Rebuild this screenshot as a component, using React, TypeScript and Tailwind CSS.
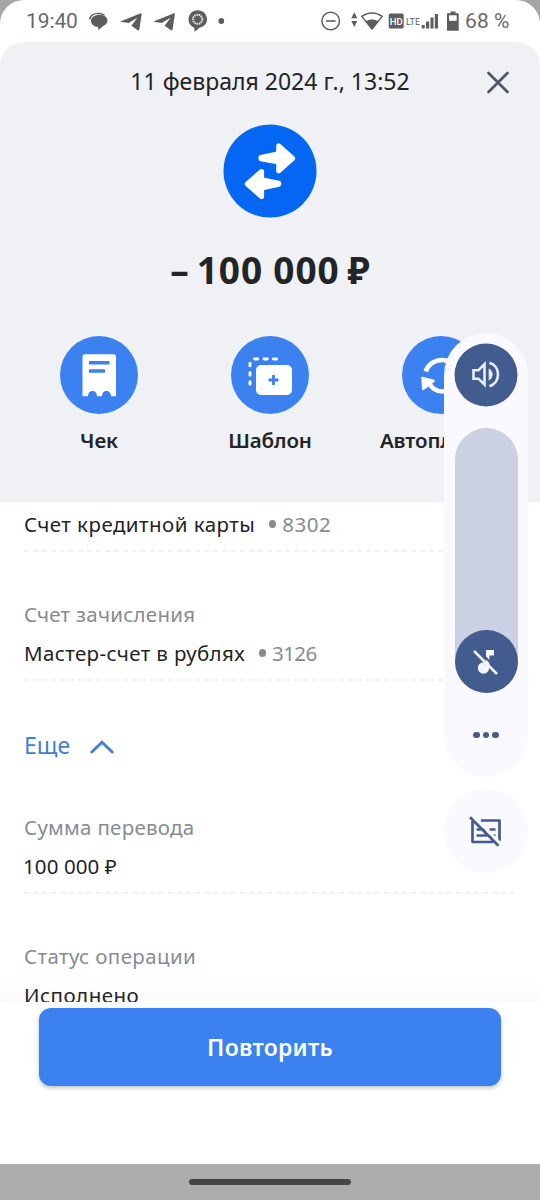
import type { ReactNode } from "react";

function StatusBar() {
  return (
    <div className="h-[42px] shrink-0 bg-[#a6a6a6]">
      <div className="flex h-full items-center justify-between rounded-t-[24px] bg-white pl-[26px] pr-[30px] font-[Roboto] text-[21px] text-[#686868]">
        <div className="flex items-center">
          <span className="w-[53px] whitespace-nowrap pt-[2px] tracking-[-0.1px]">19:40</span>
          <svg width="150" height="30" viewBox="79 6 150 30" fill="#5d5d5d">
            <path d="M89.700 19.500c.2-3.800 4.400-6.300 9-6.100 2.600.1 4.400.7 5.900 1.800" fill="none" stroke="#5d5d5d" strokeWidth="1.400" />
            <path d="M99.500 14.700c4.600 0 8 2.500 8 5.900 0 2.500-1.700 4.500-4.300 5.500l-4.700 4-.5-3c-4-.3-7-2.900-7-6.300 0-3.700 3.900-6.100 8.500-6.100z" />
            <path d="M121.500 20.900l18.700-7.500c1-.4 1.600.1 1.400 1.100l-2.200 14.800c-.2 1.300-1.100 1.500-2 .8l-6-4.400 6-8-8.800 5.300-6.700-1c-1.200-.2-1.300-.7-.4-1.100z" />
            <path d="M154.700 20.900l18.700-7.500c1-.4 1.600.1 1.400 1.100l-2.200 14.800c-.2 1.300-1.100 1.500-2 .8l-6-4.400 6-8-8.800 5.300-6.700-1c-1.200-.2-1.300-.7-.4-1.100z" />
            <path d="M197.700 10.300c5.300 0 9.300 3.900 9.300 9 0 4.200-2.900 7.500-7.500 8.500l-4.800 4-.6-4.200c-3.400-1.300-5.600-4.500-5.600-8.300 0-5.100 4-9 9.200-9z" />
            <circle cx="197.700" cy="19.300" r="4.600" fill="none" stroke="#e4e4e4" strokeWidth="2" strokeDasharray="1.500 .7" />
            <circle cx="221.300" cy="21" r="2.900" />
          </svg>
        </div>
        <div className="flex items-center">
          <svg width="146" height="30" viewBox="319 6 146 30" fill="#5d5d5d">
            <circle cx="330.700" cy="21" r="8.800" fill="none" stroke="#5d5d5d" strokeWidth="1.500" />
            <path d="M326 21h9.500" stroke="#5d5d5d" strokeWidth="1.600" />
            <path d="M354.300 12.300l3 6h-6zM354.300 27l3-6h-6z" />
            <path d="M361.800 16.400c6-4.700 14.400-4.700 20.400 0l-10.200 12.600z" fill="none" stroke="#5d5d5d" strokeWidth="1.500" strokeLinejoin="round" />
            <path d="M365.500 21.200c3.800-2.300 9.200-2.300 13 0l-6.500 8z" />
            <rect x="388.700" y="13.500" width="15" height="15" rx="1.500" />
            <text x="396.200" y="24.500" textAnchor="middle" fontSize="9.500" fontFamily="Roboto" fontWeight="500" fill="white">HD</text>
            <text x="406" y="24.700" fontSize="9" fontFamily="Roboto" textLength="14" lengthAdjust="spacingAndGlyphs">LTE</text>
            <path d="M421.700 25h3v3.500h-3zM426 21.500h3.200v7h-3.200zM430.500 17.500h3v11h-3zM434.800 14h3.200v14.500h-3.200z" />
            <path d="M450.500 11.500h5v1.700h3.200v17.500h-11.700V13.200h3.500z" />
            <path d="M449 15.300h7.700v5.500h-7.700z" fill="white" />
          </svg>
          <span className="w-[45px] whitespace-nowrap pt-[2px] tracking-[0.1px]">68 %</span>
        </div>
      </div>
    </div>
  );
}

function Action({ label, children }: { label: string; children: ReactNode }) {
  return (
    <div className="flex w-[171px] shrink-0 flex-col items-center">
      <svg width="78" height="78" viewBox="0 0 78 78">
        <circle cx="39" cy="39" r="39" fill="#3b82f0" />
        {children}
      </svg>
      <span className="mt-[11px] whitespace-nowrap text-[20.5px] font-semibold leading-[30px] tracking-[-0.1px]">{label}</span>
    </div>
  );
}

function Divider() {
  return <div className="h-[2px] w-[491px] bg-[repeating-linear-gradient(to_right,#f1f1f1_0px,#f1f1f1_5px,transparent_5px,transparent_9px)]" />;
}

type FieldProps = { label?: ReactNode; value: ReactNode; account?: ReactNode };

function Field({ label, value, account }: FieldProps) {
  return (
    <div className="whitespace-nowrap text-[20.5px] leading-[30px]">
      {label && <div className="mb-[9px] text-[#868b93]">{label}</div>}
      <div className="flex items-center">
        {value}
        {account && (
          <span className="flex items-center text-[#868b93]">
            <i className="ml-[13.500px] mr-[6px] size-[7.500px] rounded-full bg-[#868b93]" />
            {account}
          </span>
        )}
      </div>
    </div>
  );
}

function VolumePanel() {
  return (
    <div className="absolute left-[444px] top-[333px] flex w-[84px] flex-col">
      <div className="flex h-[444px] flex-col items-center rounded-[42px] bg-[#f9f9ff] pt-[10px]">
        <svg className="shrink-0" width="64" height="64" viewBox="0 0 64 64">
          <circle cx="32" cy="32" r="31.500" fill="#435c8f" />
          <g fill="none" stroke="#e8edff" strokeWidth="2.600">
            <path d="M19.500 27.200h5l6-6v20.500l-6-6h-5z" />
            <path d="M35.500 19.800c5 1.500 8.500 6 8.500 11.700s-3.500 10.200-8.500 11.700" />
          </g>
          <path d="M34.700 25.500c2.500 1.100 3.900 3.300 3.900 6s-1.400 4.900-3.900 6z" fill="#e8edff" />
        </svg>
        <div className="mt-[21px] flex h-[265px] w-[63px] shrink-0 flex-col justify-end rounded-[31.500px] bg-[#cbd0e3]">
          <svg width="63" height="63" viewBox="0 0 63 63">
            <circle cx="31.500" cy="31.500" r="31.500" fill="#435c8f" />
            <circle cx="28.500" cy="38" r="5.700" fill="#f3f5ff" />
            <path d="M31 20h8v5.500h-4.600v12H31z" fill="#f3f5ff" />
            <path d="M22 19l21 21" stroke="#435c8f" strokeWidth="2.300" />
            <path d="M19 21l23 23" stroke="#f3f5ff" strokeWidth="2.500" />
          </svg>
        </div>
        <div className="mt-[38.500px] flex gap-[2.500px]">
          <i className="size-[6.800px] rounded-full bg-[#435c8f]" />
          <i className="size-[6.800px] rounded-full bg-[#435c8f]" />
          <i className="size-[6.800px] rounded-full bg-[#435c8f]" />
        </div>
      </div>
      <div className="mt-[12px] size-[84px] rounded-full bg-[#f9f9ff]">
        <svg width="84" height="84" viewBox="0 0 84 84">
          <path d="M37 31.500h18.500V52M49.500 53h-21V32" fill="none" stroke="#435c8f" strokeWidth="2.700" strokeLinejoin="round" />
          <path d="M32.500 40.500h4.500M38 40.500h4M45.500 40.500h6M32.500 46.500h10.500M46.500 46.500h5" stroke="#435c8f" strokeWidth="2.600" />
          <path d="M30 28l26 26" stroke="#f9f9ff" strokeWidth="2.600" />
          <path d="M26 28.200L54.500 56.700" stroke="#435c8f" strokeWidth="2.700" />
        </svg>
      </div>
    </div>
  );
}

export default function App() {
  return (
    <div className="relative flex h-[1200px] w-[540px] flex-col overflow-hidden bg-white font-['Noto_Sans',sans-serif] text-[#222426]">
      <StatusBar />
      <header className="h-[459.500px] shrink-0 overflow-hidden rounded-t-[24px] bg-[#f0f1f5]">
        <div className="grid h-[82px] grid-cols-[84px_1fr_84px]">
          <span />
          <h1 className="whitespace-nowrap pt-[24px] text-center text-[23px] leading-[30px]">11 февраля 2024 г., 13:52</h1>
          <svg width="84" height="82" viewBox="456 42 84 82">
            <path d="M488.500 73l19 19M507.500 73l-19 19" stroke="#4c5868" strokeWidth="2.700" strokeLinecap="round" />
          </svg>
        </div>
        <svg className="mx-auto block" width="94" height="94" viewBox="223 124 94 94">
          <circle cx="270" cy="171" r="46.500" fill="#0566f3" />
          <g fill="white" stroke="white" strokeWidth="5" strokeLinejoin="round">
            <path d="M278.700 145.800L292.700 158.300 278.700 170.900V162.100L260.900 158.700V157.500L278.700 153.700z" />
            <path d="M261.600 171.500L247.300 184 261.600 196.500V188L278.800 184.300V183.200L261.600 179.800z" />
          </g>
        </svg>
        <div className="mt-[29px] flex justify-center whitespace-nowrap text-[37px] font-bold leading-[46px]">
          <span className="mr-[8px]">–</span>
          <span className="tracking-[0.85px]">100 000</span>
          <span className="ml-[8px]">₽</span>
        </div>
        <div className="mt-[43px] flex pl-[13.500px]">
          <Action label="Чек">
            <path d="M24.500 18.300h29q2.500 0 2.500 2.500v39.400h-5c0-7-9-7-9 0h-5c0-7-9-7-9 0h-5.500V20.800q0-2.500 2-2.500z" fill="white" />
            <path d="M29 26.700h20.500M29 35h16" stroke="#3b82f0" strokeWidth="3.500" />
          </Action>
          <Action label="Шаблон">
            <rect x="25" y="29" width="36" height="30" rx="5" fill="white" />
            <path d="M37.500 44h10M42.500 39v10" stroke="#3b82f0" strokeWidth="2.800" />
            <path d="M19 29.900v-2.600M19 39.200v-2.600M19 48.300v-2.600M23.500 23h3.200M33 23h3.200M42.500 23h3.200" stroke="white" strokeWidth="2.900" strokeLinecap="round" />
          </Action>
          <Action label="Автоплатёж">
            <path d="M23.700 35.500A17 16 0 0 1 56.300 35.500M27 47c3 5.500 7.500 8.500 13 8.500 7 0 12-3 15.500-8" fill="none" stroke="white" strokeWidth="4.600" />
            <path d="M20.300 41.800l11.700 3-4.700 4-6.300 4.300z" fill="white" stroke="white" strokeWidth="2" strokeLinejoin="round" />
          </Action>
        </div>
      </header>
      <main className="flex h-[500.500px] shrink-0 flex-col overflow-hidden bg-[linear-gradient(to_top,#fafafa_0px,#ffffff_22px)] pl-[24px] pt-[7.500px]">
        <Field
          value={<span className="tracking-[0.47px]">Счет кредитной карты</span>}
          account={<span className="tracking-[0.5px]">8302</span>}
        />
        <div className="mt-[11px]"><Divider /></div>
        <div className="mt-[47px]">
          <Field
            label={<span className="tracking-[0.25px]">Счет зачисления</span>}
            value={<span className="tracking-[0.37px]">Мастер-счет в рублях</span>}
            account={<span className="tracking-[-0.6px]">3126</span>}
          />
        </div>
        <div className="mt-[11px]"><Divider /></div>
        <button className="mt-[48px] flex h-[32px] items-center self-start whitespace-nowrap text-[23px] leading-[32px] text-[#3f7fd8]">
          <span>Еще</span>
          <svg className="ml-[20px] mt-[4px]" width="24" height="16" viewBox="0 0 24 16">
            <path d="M1.800 13L12 3.200 22.200 13" fill="none" stroke="#3f7fd8" strokeWidth="2.900" strokeLinecap="round" />
          </svg>
        </button>
        <div className="mt-[51px]">
          <Field label={<span className="tracking-[0.27px]">Сумма перевода</span>} value={<span className="-ml-px tracking-[0.1px]">100 000 ₽</span>} />
        </div>
        <div className="mt-[11px]"><Divider /></div>
        <div className="mt-[47px]">
          <Field label={<span className="tracking-[0.38px]">Статус операции</span>} value={<span className="tracking-[0.48px]">Исполнено</span>} />
        </div>
      </main>
      <footer className="h-[162px] shrink-0 bg-white px-[39px] pt-[6px]">
        <button className="h-[78px] w-full rounded-[12px] bg-[#3b82f0] text-[23px] font-semibold tracking-[0.25px] text-white shadow-[0_2px_4px_rgba(0,0,0,0.25)]">Повторить</button>
      </footer>
      <nav className="flex h-[36px] shrink-0 items-center justify-center bg-[#adadad]">
        <i className="h-[6px] w-[162px] rounded-full bg-[#454545]" />
      </nav>
      <VolumePanel />
    </div>
  );
}
